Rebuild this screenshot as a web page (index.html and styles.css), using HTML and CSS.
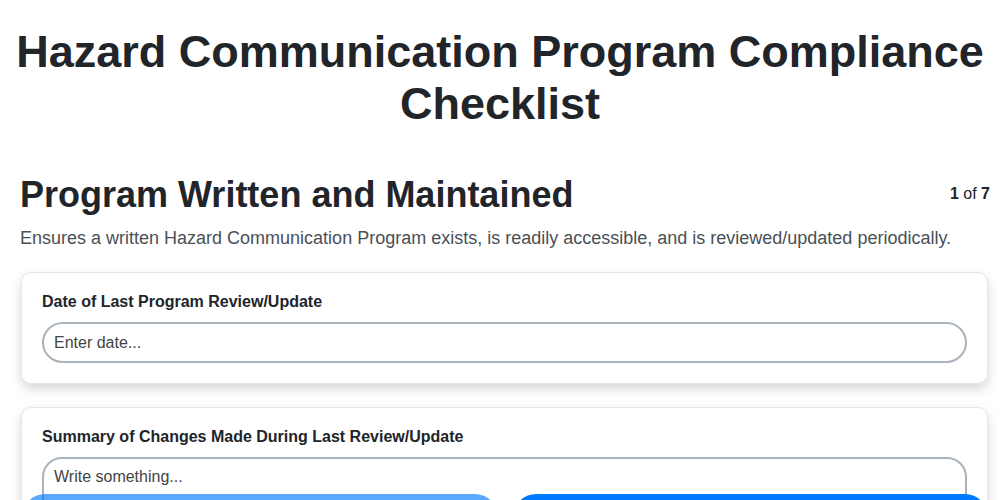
FILE: index.html
```html
<!DOCTYPE html>
<html lang="en">
<head>
<meta charset="utf-8">
<title>Hazard Communication Program Compliance Checklist</title>
<link rel="stylesheet" href="styles.css">
</head>
<body>
<main class="page">
  <h1 class="title">Hazard Communication Program Compliance Checklist</h1>
  <section class="step">
    <div class="step-head">
      <h2 class="step-title">Program Written and Maintained</h2>
      <div class="step-count"><b>1</b> of <b>7</b></div>
    </div>
    <p class="step-desc">Ensures a written Hazard Communication Program exists, is readily accessible, and is reviewed/updated periodically.</p>
    <div class="card">
      <label class="field-label" for="f1">Date of Last Program Review/Update</label>
      <input class="field-input" id="f1" type="text" placeholder="Enter date...">
    </div>
    <div class="card">
      <label class="field-label" for="f2">Summary of Changes Made During Last Review/Update</label>
      <textarea class="field-area" id="f2" placeholder="Write something..."></textarea>
    </div>
  </section>
</main>
<footer class="nav">
  <button class="btn btn-prev" disabled>Previous</button>
  <button class="btn btn-next">Next</button>
</footer>
</body>
</html>
```

FILE: styles.css
```css
* { box-sizing: border-box; }
html, body { margin: 0; padding: 0; background: #fff; }
body {
  font-family: "Liberation Sans", Arial, sans-serif;
  color: #212529;
  overflow: hidden;
}
.page {
  padding: 0 12px 80px;
}
.title {
  margin: 26px 0 0;
  font-size: 45px;
  line-height: 52px;
  font-weight: 700;
  text-align: center;
  color: #212529;
}
.step {
  margin-top: 43px;
  padding-left: 8px;
}
.step-head {
  display: flex;
  justify-content: space-between;
  align-items: center;
  margin-right: -2px;
}
.step-title {
  margin: 0;
  font-size: 36px;
  line-height: 43px;
  font-weight: 700;
}
.step-count {
  font-size: 16px;
  color: #212529;
  margin-top: -2px;
}
.step-count b { font-weight: 700; }
.step-desc {
  margin: 10px 0 22px;
  font-size: 18px;
  line-height: 24px;
  color: #495057;
}
.card {
  margin: 0 0 23px 1px;
  padding: 19px 20px 20px;
  background: #fff;
  border: 1px solid #e6e6ec;
  border-radius: 10px;
  box-shadow: 0 5px 12px rgba(0, 0, 0, 0.16);
}
.field-label {
  display: block;
  font-size: 16px;
  line-height: 20px;
  font-weight: 700;
  color: #212529;
  margin-bottom: 10px;
}
.field-input, .field-area {
  display: block;
  width: 100%;
  font-family: "Liberation Sans", Arial, sans-serif;
  font-size: 16px;
  color: #333;
  background: #fff;
  border: 2px solid #aab3bc;
  outline: none;
}
.field-input {
  height: 41px;
  padding: 0 10px;
  border-radius: 21px;
}
.field-area {
  height: 100px;
  padding: 9px 10px;
  border-radius: 20px;
  resize: none;
}
.field-input::placeholder, .field-area::placeholder { color: #444; opacity: 1; }
.nav {
  position: fixed;
  left: 0;
  right: 0;
  bottom: -60px;
  display: flex;
  gap: 15px;
  padding: 0 12px 0 22px;
}
.btn {
  flex: 1;
  height: 66px;
  padding-top: 24px;
  border: none;
  border-radius: 23px;
  background: #007bff;
  color: #fff;
  font-family: "Liberation Sans", Arial, sans-serif;
  font-size: 16px;
  font-weight: 700;
}
.btn-prev { opacity: 0.65; }
```
